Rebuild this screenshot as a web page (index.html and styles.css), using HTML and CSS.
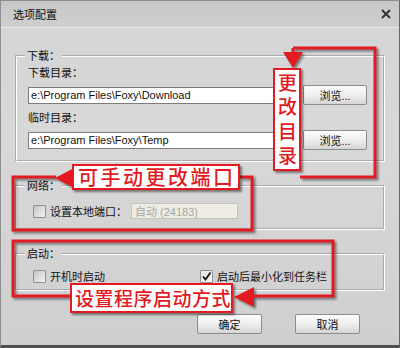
FILE: index.html
```html
<!DOCTYPE html>
<html>
<head>
  <meta charset="UTF-8">
  <title>选项配置</title>
  <link rel="stylesheet" href="styles.css">
</head>
<body>
  <div class="window">
    <div class="titlebar">
      <span class="title">选项配置</span>
      <svg class="close" width="10" height="10" viewBox="0 0 10 10">
        <path d="M1 1 L9 9 M9 1 L1 9" stroke="#333" stroke-width="2" fill="none"/>
      </svg>
    </div>

    <div class="content">
      <!-- Download -->
      <fieldset class="group group-download">
        <legend>下载：</legend>
        <div class="field-label">下载目录：</div>
        <div class="path-row">
          <input class="path" type="text" value="e:\Program Files\Foxy\Download" readonly>
          <button class="btn btn-browse">浏览...</button>
        </div>
        <div class="field-label field-label-second">临时目录：</div>
        <div class="path-row">
          <input class="path" type="text" value="e:\Program Files\Foxy\Temp" readonly>
          <button class="btn btn-browse">浏览...</button>
        </div>
      </fieldset>

      <!-- Network -->
      <fieldset class="group group-network">
        <legend>网络：</legend>
        <div class="check-row">
          <span class="checkbox"></span>
          <span class="check-text">设置本地端口：</span>
          <input class="port" type="text" value="自动 (24183)" disabled>
        </div>
      </fieldset>

      <!-- Startup -->
      <fieldset class="group group-start">
        <legend>启动：</legend>
        <div class="check-row">
          <div class="check-item check-item-first">
            <span class="checkbox"></span>
            <span class="check-text">开机时启动</span>
          </div>
          <div class="check-item">
            <span class="checkbox checked">
              <svg width="11" height="11" viewBox="0 0 11 11">
                <path d="M2 5.5 L4.5 8.5 L9.5 1.5" stroke="#111" stroke-width="1.8" fill="none"/>
              </svg>
            </span>
            <span class="check-text">启动后最小化到任务栏</span>
          </div>
        </div>
      </fieldset>

      <div class="dialog-buttons">
        <button class="btn btn-dialog">确定</button>
        <button class="btn btn-dialog">取消</button>
      </div>
    </div>
  </div>

  <!-- red annotation frames -->
  <svg class="marks" width="400" height="348" viewBox="0 0 400 348">
    <g stroke="#e41a22" stroke-width="3" fill="none">
      <path d="M293 48 H375 V177 H300"/>
      <path d="M293 48 V56"/>
      <path d="M56 177 H13 V230 H252 V177 H240"/>
      <path d="M70 296 H13 V241 H333 V296 H252"/>
    </g>
    <g fill="#e41a22">
      <polygon points="283,52 303,52 293,68"/>
      <polygon points="55,178 74,168 74,188"/>
      <polygon points="234,297 254,287 254,307"/>
    </g>
  </svg>

  <div class="note note-dir">更改目录</div>
  <div class="note note-port">可手动更改端口</div>
  <div class="note note-start">设置程序启动方式</div>
</body>
</html>
```

FILE: styles.css
```css
body {
  position: relative;
  width: 400px;
  height: 348px;
  margin: 0;
  overflow: hidden;
  font-family: "Liberation Sans", "Noto Sans CJK SC", sans-serif;
  font-size: 11px;
  color: #111;
}

.window {
  width: 400px;
  height: 348px;
  box-sizing: border-box;
  background: linear-gradient(#d4d4d4, #d8d8d8 40%, #cfcfcf);
  border: 1px solid #8e8e8e;
  border-right-color: #666;
  border-bottom: 3px solid #4f4f4f;
}

.titlebar {
  height: 26px;
  display: flex;
  align-items: center;
  justify-content: space-between;
  padding: 0 8px 0 12px;
  background: linear-gradient(#c8c8c8, #cecece);
  border-bottom: 1px solid #e6e6e6;
}

.title {
  font-size: 11px;
  color: #111;
}

.content {
  padding: 21px 14px 0 14px;
}

.group {
  margin: 0;
  border: 2px groove #ffffff;
  padding: 3px 16px 10px 8px;
}

.group legend {
  padding: 0 2px;
  font-size: 11px;
  line-height: 14px;
}

.field-label {
  margin-left: 3px;
  line-height: 14px;
}

.field-label-second {
  margin-top: 6px;
}

.path-row {
  display: flex;
  align-items: center;
  height: 20px;
  margin: 5px 0 0 3px;
}

.path {
  flex: 1;
  min-width: 0;
  height: 17px;
  box-sizing: border-box;
  padding: 0 2px;
  border: 1px solid #7c7c7c;
  background: #fff;
  font-family: "Liberation Sans", sans-serif;
  font-size: 11px;
  color: #111;
}

.btn {
  box-sizing: border-box;
  height: 20px;
  padding: 0;
  border: 1px solid #8c8c8c;
  border-radius: 2px;
  background: linear-gradient(#fdfdfd, #ececec 55%, #d6d6d6);
  font-family: "Liberation Sans", "Noto Sans CJK SC", sans-serif;
  font-size: 11px;
  color: #111;
}

.btn-browse {
  width: 64px;
  margin-left: 6px;
}

.group-network {
  margin-top: 17px;
  padding: 9px 8px 8px 8px;
}

.group-start {
  margin-top: 17px;
  padding: 7px 8px 5px 8px;
}

.check-row {
  display: flex;
  align-items: center;
  height: 18px;
  margin-left: 8px;
}

.group-start .check-row {
  height: 16px;
}

.check-item {
  display: flex;
  align-items: center;
}

.check-item-first {
  width: 167px;
}

.checkbox {
  width: 13px;
  height: 13px;
  box-sizing: border-box;
  border: 1px solid #8f8f8f;
  border-radius: 1px;
  background: linear-gradient(135deg, #c4c4c4, #f4f4f4);
  display: flex;
  align-items: center;
  justify-content: center;
}

.checkbox.checked {
  background: linear-gradient(135deg, #e2e2e2, #fafafa);
}

.check-text {
  margin-left: 4px;
}

.port {
  width: 107px;
  height: 16px;
  box-sizing: border-box;
  margin-left: 4px;
  padding: 0 3px;
  border: 1px solid #c6c4b8;
  background: #eeece3;
  font-family: "Liberation Sans", "Noto Sans CJK SC", sans-serif;
  font-size: 11px;
  color: #a7a7a7;
}

.dialog-buttons {
  display: flex;
  justify-content: flex-end;
  gap: 33px;
  margin-top: 23px;
  padding-right: 25px;
}

.btn-dialog {
  width: 65px;
}

.marks {
  position: absolute;
  left: 0;
  top: 0;
  filter: drop-shadow(2px 2px 1px rgba(0, 0, 0, 0.45));
}

.note {
  position: absolute;
  box-sizing: border-box;
  background: #fff;
  border: 2px solid #e41a22;
  box-shadow: 2px 2px 2px rgba(0, 0, 0, 0.45);
  color: #e41a22;
  font-family: "Noto Sans CJK SC", sans-serif;
  font-weight: 500;
  white-space: nowrap;
}

.note-dir {
  left: 273px;
  top: 68px;
  width: 28px;
  height: 103px;
  padding-top: 3px;
  writing-mode: vertical-rl;
  font-size: 19px;
  line-height: 24px;
  letter-spacing: 5.5px;
}

.note-port {
  left: 72px;
  top: 164px;
  width: 168px;
  height: 26px;
  padding-left: 4px;
  font-size: 20px;
  line-height: 22px;
  letter-spacing: 2.5px;
}

.note-start {
  left: 70px;
  top: 283px;
  width: 163px;
  height: 30px;
  padding-left: 3px;
  font-size: 19px;
  line-height: 26px;
  letter-spacing: 0.5px;
}
```
